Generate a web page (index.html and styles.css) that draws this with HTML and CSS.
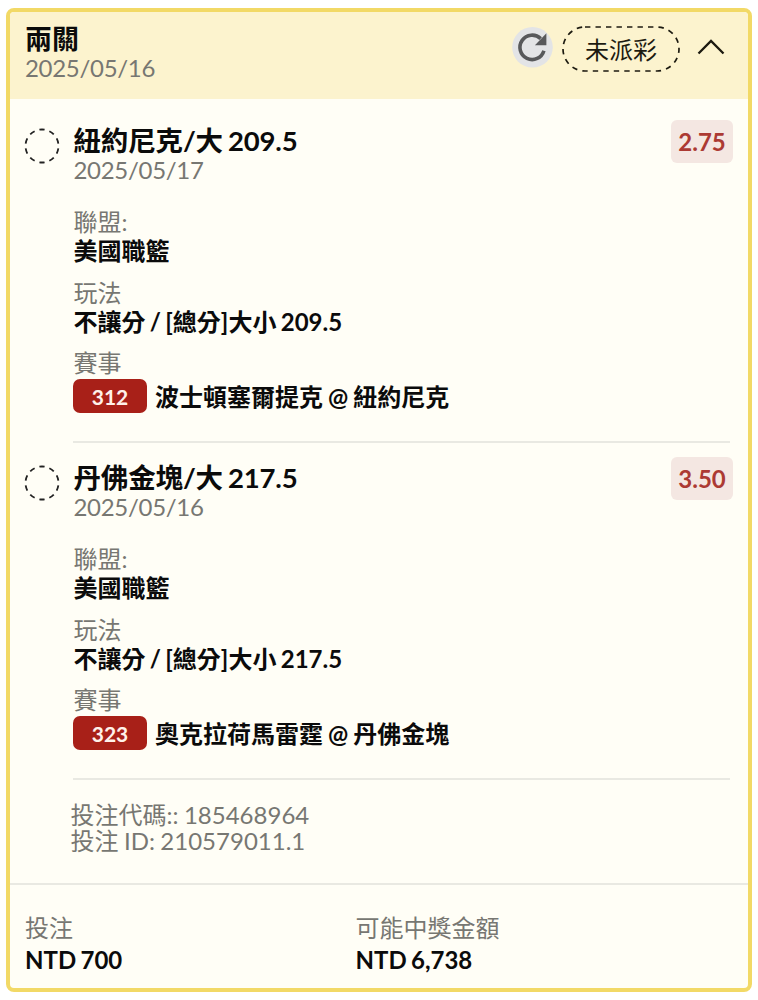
FILE: index.html
```
<!DOCTYPE html>
<html lang="zh-Hant">
<head>
<meta charset="utf-8">
<title>兩關</title>
<link rel="stylesheet" href="styles.css">
</head>
<body>
<article class="card">
  <header class="head">
    <div class="head-text">
      <div class="head-title">兩關</div>
      <div class="date">2025/05/16</div>
    </div>
    <div class="head-actions">
      <svg class="refresh" width="42" height="42" viewBox="0 0 42 42"><circle cx="20.500" cy="21.300" r="20.300" fill="#e3e4e6"/><path d="M31.900 24.700A12.200 12.200 0 1 1 28.700 12.600" fill="none" stroke="#58595b" stroke-width="3.600"/><path d="M34.400 7.300v12H22.900z" fill="#58595b"/></svg>
      <div class="pill"><svg class="pill-line" width="118" height="46" viewBox="0 0 118 46"><rect x="1" y="1" width="116" height="44" rx="22" fill="none" stroke="#1c1a10" stroke-width="1.700" stroke-dasharray="5.400 5.100"/></svg><span>未派彩</span></div>
      <svg class="chevron" width="28" height="16" viewBox="0 0 28 16"><path d="M1.500 14.500 14 2l12.500 12.500" fill="none" stroke="#1c1a10" stroke-width="2.300"/></svg>
    </div>
  </header>

  <section class="legs">
    <div class="leg">
      <svg class="ring" width="36" height="36" viewBox="0 0 36 36"><circle cx="18" cy="18" r="16.500" fill="none" stroke="#222" stroke-width="1.800" pathLength="100" stroke-dasharray="5.200 4.800" stroke-dashoffset="-2.400"/></svg>
      <div class="leg-body">
        <div class="leg-title">紐約尼克/大 209.5</div>
        <div class="date">2025/05/17</div>
        <div class="label league">聯盟:</div>
        <div class="value">美國職籃</div>
        <div class="label play">玩法</div>
        <div class="value">不讓分 / [總分]大小 209.5</div>
        <div class="label event">賽事</div>
        <div class="match"><span class="num">312</span><span>波士頓塞爾提克 @ 紐約尼克</span></div>
      </div>
      <div class="odds">2.75</div>
    </div>
    <div class="leg">
      <svg class="ring" width="36" height="36" viewBox="0 0 36 36"><circle cx="18" cy="18" r="16.500" fill="none" stroke="#222" stroke-width="1.800" pathLength="100" stroke-dasharray="5.200 4.800" stroke-dashoffset="-2.400"/></svg>
      <div class="leg-body">
        <div class="leg-title">丹佛金塊/大 217.5</div>
        <div class="date">2025/05/16</div>
        <div class="label league">聯盟:</div>
        <div class="value">美國職籃</div>
        <div class="label play">玩法</div>
        <div class="value">不讓分 / [總分]大小 217.5</div>
        <div class="label event">賽事</div>
        <div class="match"><span class="num">323</span><span>奧克拉荷馬雷霆 @ 丹佛金塊</span></div>
      </div>
      <div class="odds">3.50</div>
    </div>
  </section>

  <section class="codes">
    <div>投注代碼:: 185468964</div>
    <div>投注 ID: 210579011.1</div>
  </section>

  <footer class="foot">
    <div><div class="label">投注</div><div class="amount">NTD 700</div></div>
    <div><div class="label">可能中獎金額</div><div class="amount">NTD 6,738</div></div>
  </footer>
</article>
</body>
</html>
```
FILE: styles.css
```
* { box-sizing: border-box; }
body {
  margin: 0;
  padding: 8px 6px;
  background: #fff;
  color: #0b0b0b;
  font: 24px/28px Lato, "Noto Sans CJK TC", sans-serif;
  word-spacing: -1.5px;
  white-space: nowrap;
}
.card {
  width: 746px;
  height: 984px;
  border: 4px solid #f2d966;
  border-radius: 8px;
  background: #fffef6;
  overflow: hidden;
}
.head {
  display: flex;
  justify-content: space-between;
  height: 87px;
  padding: 14px 23px 0 15px;
  background: #fcf3ce;
}
.head-title {
  margin-bottom: 2px;
  font-size: 27px;
  line-height: 26px;
  font-weight: 700;
}
.date, .label, .codes { color: #777772; }
.date { letter-spacing: -0.3px; }
.head-actions { display: flex; align-items: flex-start; }
.pill {
  position: relative;
  display: flex;
  align-items: center;
  justify-content: center;
  width: 118px;
  height: 46px;
  margin-left: 8px;
  padding-top: 1px;
  color: #1c1a10;
}
.pill-line { position: absolute; inset: 0; }
.chevron { margin: 13px 0 0 17px; }
.legs { padding-top: 7px; }
.leg {
  display: flex;
  height: 337px;
  padding: 0 15px 0 14px;
}
.ring { flex: none; margin-top: 22px; }
.leg-body {
  flex: none;
  width: 657px;
  margin-left: 13px;
  padding-top: 20px;
  border-bottom: 2px solid #e9e9e2;
}
.leg-body .label, .leg-body .value, .leg-body .date, .leg-title { padding-left: 0.5px; }
.leg-title {
  font-size: 27.500px;
  line-height: 30px;
  font-weight: 700;
  letter-spacing: -0.15px;
}
.league { margin-top: 24px; }
.value { line-height: 30px; font-weight: 700; }
.play { margin-top: 13px; }
.event { margin-top: 12px; }
.match {
  display: flex;
  align-items: center;
  gap: 8px;
  height: 34px;
  margin-top: 2px;
  font-weight: 700;
  word-spacing: -0.8px;
}
.match > span:last-child { padding-top: 2px; }
.num {
  width: 74px;
  height: 34px;
  border-radius: 7px;
  background: #a82018;
  color: #fff1ea;
  font-size: 21px;
  line-height: 35px;
  text-align: center;
}
.odds {
  flex: none;
  width: 62px;
  height: 43px;
  margin: 14px 0 0 -59px;
  border-radius: 6px;
  background: #f4e7e2;
  color: #ac3a33;
  font-weight: 700;
  line-height: 44px;
  text-align: center;
}
.codes {
  height: 105px;
  padding: 22px 0 0 60.500px;
  border-bottom: 2px solid #e9e9e2;
  line-height: 26px;
  word-spacing: -0.7px;
}
.foot {
  display: grid;
  grid-template-columns: 330.500px 1fr;
  padding: 29px 15px 0;
}
.amount { margin-top: 2px; line-height: 32px; font-weight: 700; }
```
